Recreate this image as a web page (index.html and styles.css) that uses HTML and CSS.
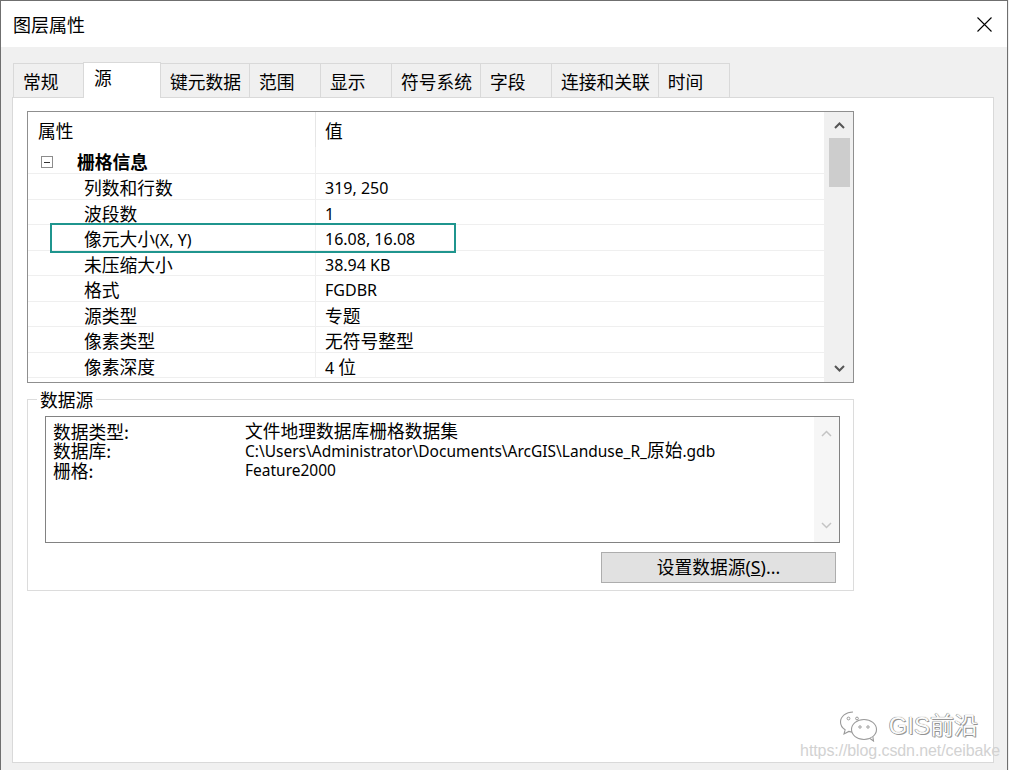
FILE: index.html
```html
<!DOCTYPE html>
<html lang="zh-CN">
<head>
<meta charset="utf-8">
<title>图层属性</title>
<link rel="stylesheet" href="styles.css">
</head>
<body>
<div class="window">
  <div class="titlebar">
    <span class="title">图层属性</span>
    <svg class="close" width="15" height="15" viewBox="0 0 15 15"><path d="M0.5 0.5L14.5 14.5M14.5 0.5L0.5 14.5" stroke="#000" stroke-width="1.1" fill="none"/></svg>
  </div>
  <div class="body">
    <div class="tabs">
      <div class="tab">常规</div>
      <div class="tab active">源</div>
      <div class="tab">键元数据</div>
      <div class="tab">范围</div>
      <div class="tab">显示</div>
      <div class="tab">符号系统</div>
      <div class="tab">字段</div>
      <div class="tab">连接和关联</div>
      <div class="tab">时间</div>
    </div>
    <div class="panel">
      <div class="grid">
        <div class="grid-main">
          <div class="row head"><div class="c1">属性</div><div class="c2 cjk">值</div></div>
          <div class="row group"><div class="c1"><span class="toggle"></span><b class="group-name">栅格信息</b></div><div class="c2"></div></div>
          <div class="row"><div class="c1">列数和行数</div><div class="c2">319, 250</div></div>
          <div class="row"><div class="c1">波段数</div><div class="c2">1</div></div>
          <div class="row marked"><div class="c1">像元大小<span class="lat">(X, Y)</span></div><div class="c2">16.08, 16.08</div><div class="mark"></div></div>
          <div class="row"><div class="c1">未压缩大小</div><div class="c2">38.94 KB</div></div>
          <div class="row"><div class="c1">格式</div><div class="c2">FGDBR</div></div>
          <div class="row"><div class="c1">源类型</div><div class="c2 cjk">专题</div></div>
          <div class="row"><div class="c1">像素类型</div><div class="c2 cjk">无符号整型</div></div>
          <div class="row"><div class="c1">像素深度</div><div class="c2">4 <span class="cjk">位</span></div></div>
        </div>
        <div class="vscroll">
          <div class="sbtn"><svg width="11" height="7" viewBox="0 0 11 7"><path d="M1 6L5.5 1.5L10 6" stroke="#555" stroke-width="2" fill="none"/></svg></div>
          <div class="thumb"></div>
          <div class="track"></div>
          <div class="sbtn"><svg width="11" height="7" viewBox="0 0 11 7"><path d="M1 1L5.5 5.5L10 1" stroke="#555" stroke-width="2" fill="none"/></svg></div>
        </div>
      </div>
      <fieldset class="source">
        <legend>数据源</legend>
        <div class="textbox">
          <div class="tb-content">
            <div class="kv"><span class="k">数据类型:</span><span class="v cjk">文件地理数据库栅格数据集</span></div>
            <div class="kv"><span class="k">数据库:</span><span class="v">C:\Users\Administrator\Documents\ArcGIS\Landuse_R_<span class="cjk">原始</span>.gdb</span></div>
            <div class="kv"><span class="k">栅格:</span><span class="v">Feature2000</span></div>
          </div>
          <div class="tb-scroll">
            <svg width="11" height="7" viewBox="0 0 11 7"><path d="M1 6L5.5 1.5L10 6" stroke="#c4c4c4" stroke-width="1.5" fill="none"/></svg>
            <svg width="11" height="7" viewBox="0 0 11 7"><path d="M1 1L5.5 5.5L10 1" stroke="#c4c4c4" stroke-width="1.5" fill="none"/></svg>
          </div>
        </div>
        <div class="btn-row"><button class="btn" type="button">设置数据源(<u>S</u>)...</button></div>
      </fieldset>
    </div>
  </div>
  <div class="watermark">
    <div class="wm-brand">
      <svg class="wm-icon" width="40" height="32" viewBox="0 0 40 32">
        <path d="M14 2C7 2 1.5 6.5 1.5 12c0 3.2 1.8 6 4.6 7.8L5 24l4.8-2.6c1.3.4 2.7.6 4.2.6" fill="#fff" stroke="#9a9a9a" stroke-width="1.1"/>
        <ellipse cx="25" cy="19.5" rx="12.5" ry="10" fill="#fff" stroke="#9a9a9a" stroke-width="1.1"/>
        <path d="M31 28.5l3.5 2.5-.6-4" fill="#fff" stroke="#9a9a9a" stroke-width="1.1"/>
        <circle cx="9.5" cy="8.5" r="1.4" fill="none" stroke="#9a9a9a"/>
        <circle cx="18" cy="8.5" r="1.4" fill="none" stroke="#9a9a9a"/>
        <circle cx="21" cy="17" r="1.2" fill="none" stroke="#9a9a9a"/>
        <circle cx="29" cy="17" r="1.2" fill="none" stroke="#9a9a9a"/>
      </svg>
      <span class="wm-text">GIS前沿</span>
    </div>
    <div class="wm-url">https://blog.csdn.net/ceibake</div>
  </div>
</div>
</body>
</html>
```

FILE: styles.css
```css
* { box-sizing: border-box; }
html, body { margin: 0; padding: 0; }
body {
  background: #f0f0f0;
  font-family: "Noto Sans", "Noto Sans CJK SC", sans-serif;
  font-size: 17.75px;
  color: #000;
}
.window {
  position: relative;
  width: 1008px;
  height: 770px;
  border: 1px solid #6f6f6f;
  border-bottom: none;
  display: flex;
  flex-direction: column;
  background: #f0f0f0;
  overflow: hidden;
}
.titlebar {
  height: 46px;
  background: #fff;
  display: flex;
  align-items: center;
  justify-content: space-between;
  padding: 0 15px 0 12px;
  flex: none;
}
.title {
  font-family: "Noto Sans CJK SC", sans-serif;
  font-size: 18px;
  line-height: 20px;
}
.close { display: block; margin-top: 1px; }
.body {
  flex: 1;
  display: flex;
  flex-direction: column;
  padding: 15px 13px 7px 11px;
  min-height: 0;
}
.tabs {
  display: flex;
  align-items: flex-end;
  height: 36px;
  margin: 0 0 -1px 1px;
  position: relative;
  z-index: 1;
  flex: none;
}
.tab {
  height: 34px;
  margin-bottom: 1px;
  margin-right: -1px;
  min-width: 72px;
  padding: 2px 8px 0 9px;
  line-height: 31px;
  border: 1px solid #d9d9d9;
  border-bottom: none;
  background: #f0f0f0;
  font-family: "Noto Sans CJK SC", sans-serif;
  white-space: nowrap;
}
.tab:first-child { min-width: 71px; }
.tab.active {
  height: 36px;
  margin-bottom: 0;
  min-width: 78px;
  padding-top: 0;
  padding-left: 10px;
  line-height: 29px;
  background: #fff;
  position: relative;
  z-index: 2;
}
.panel {
  flex: 1;
  background: #fff;
  border: 1px solid #d9d9d9;
  padding: 13px 0 0 14px;
  min-height: 0;
}
.grid {
  width: 827px;
  height: 272px;
  border: 1px solid #8f8f8f;
  display: flex;
}
.grid-main {
  flex: 1;
  border-right: 1px solid #f0f0f0;
}
.row {
  display: flex;
  height: 25.5px;
  border-bottom: 1px solid #efefef;
  line-height: 22px;
  white-space: nowrap;
}
.row > .c1, .row > .c2 { padding-top: 3px; }
.row.head {
  height: 35px;
  border-bottom: none;
  line-height: 32px;
}
.row.group {
  height: 27px;
  line-height: 22px;
}
.c1 {
  width: 288px;
  flex: none;
  padding-left: 56px;
  border-right: 1px solid #efefef;
}
.lat { font-size: 16px; }
.row.head .c1 { padding-left: 10px; border-right-color: #e6e6e6; }
.row.group .c1 { padding-left: 13px; padding-top: 4px; display: flex; align-items: center; }
.c2 {
  flex: 1;
  padding-left: 9px;
  font-size: 16px;
}
.cjk { font-size: 17.75px; }
.toggle {
  position: relative;
  width: 12px;
  height: 12px;
  border: 1px solid #8c8c8c;
  margin-right: 24px;
  flex: none;
}
.toggle::after {
  content: "";
  position: absolute;
  left: 2px;
  top: 4.5px;
  width: 6px;
  height: 1px;
  background: #333;
}
.group-name { font-weight: 700; }
.row.marked { position: relative; }
.mark {
  position: absolute;
  left: 22px;
  top: -2px;
  width: 406px;
  height: 30px;
  border: 2px solid #1f958e;
}
.vscroll {
  width: 28px;
  flex: none;
  background: #f0f0f0;
  display: flex;
  flex-direction: column;
}
.sbtn {
  height: 26px;
  display: flex;
  align-items: center;
  justify-content: center;
  flex: none;
}
.sbtn:last-child { height: 28px; }
.thumb {
  height: 49px;
  margin: 0 3px 0 4px;
  background: #cdcdcd;
  flex: none;
}
.track { flex: 1; }
.source {
  width: 827px;
  margin: 6px 0 0 0;
  padding: 0;
  border: 1px solid #dcdcdc;
  min-width: 0;
}
.source legend {
  margin-left: 9px;
  padding: 0 3px;
  line-height: 20px;
  font-family: "Noto Sans CJK SC", sans-serif;
}
.textbox {
  width: 795px;
  height: 127px;
  margin: 7px 0 0 17px;
  border: 1px solid #828282;
  display: flex;
}
.tb-content {
  flex: 1;
  padding: 5px 0 0 7px;
  line-height: 19px;
}
.kv { display: flex; white-space: nowrap; }
.k { width: 192px; flex: none; font-family: "Noto Sans CJK SC", sans-serif; }
.v { font-size: 15.5px; }
.v.cjk, .v .cjk { font-size: 17.75px; }
.tb-scroll {
  width: 25px;
  flex: none;
  background: #f6f6f6;
  display: flex;
  flex-direction: column;
  align-items: center;
  justify-content: space-between;
  padding: 13px 0 13px;
}
.btn-row {
  display: flex;
  justify-content: flex-end;
  padding: 9px 17px 7px 0;
}
.btn {
  width: 235px;
  height: 31px;
  background: #e1e1e1;
  border: 1px solid #adadad;
  font-family: "Noto Sans", "Noto Sans CJK SC", sans-serif;
  font-size: 17.75px;
  line-height: 27px;
  padding: 0;
  color: #000;
}
.watermark {
  position: absolute;
  left: 799px;
  top: 709px;
  width: 205px;
  display: flex;
  flex-direction: column;
  align-items: flex-end;
}
.wm-brand {
  display: flex;
  align-items: center;
  margin-right: 27px;
}
.wm-icon { display: block; margin-right: 10px; }
.wm-text {
  font-family: "Liberation Sans", "Noto Sans CJK SC", sans-serif;
  font-size: 24px;
  line-height: 30px;
  color: #fbfbfb;
  text-shadow: 0 0 1px #6a6a6a, 1px 1px 0 #9a9a9a, -0.5px -0.5px 0 #8a8a8a;
}
.wm-url {
  font-family: "Liberation Sans", sans-serif;
  font-size: 16px;
  line-height: 18px;
  color: #d2d2d2;
  letter-spacing: -0.1px;
  margin-right: 5px;
}
```
